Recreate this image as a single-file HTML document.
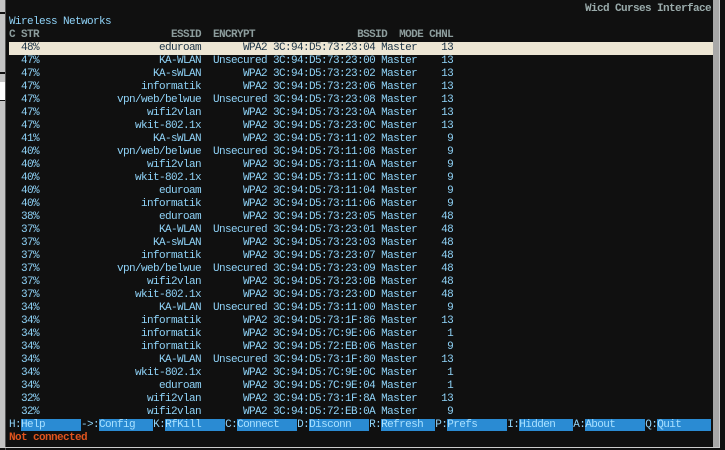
<!DOCTYPE html>
<html><head><meta charset="utf-8"><style>
html,body{margin:0;padding:0;background:#101010;width:725px;height:450px;overflow:hidden;position:relative}
.l{position:absolute;left:0;width:5px;background:#c4c4c4}
pre{margin:0;position:absolute;left:9px;font-family:"Liberation Mono",monospace;font-size:11px;letter-spacing:-0.6px;line-height:13px;height:13px;color:#8fd3f8;white-space:pre}
.hl{background:#ede6d4;color:#1d3446;left:9px;width:704px}
.hd{color:#8d9d9d;font-weight:bold}
.k{color:#8fd3f8}
.b{background:#2a8bd3;color:#a8e0ff}
</style></head><body>
<div class="l" style="top:0;height:12px"></div>
<div class="l" style="top:14px;height:58px"></div>
<div class="l" style="top:74px;height:8px"></div>
<div style="position:absolute;left:0;top:82px;width:5px;height:18px;background:#fff"></div>
<div class="l" style="top:101px;height:346px"></div>
<div style="position:absolute;left:5px;top:0;width:1px;height:450px;background:#555"></div>
<div style="position:absolute;left:713px;top:0;width:6px;height:447px;background:#a8a8a8"></div>
<div style="position:absolute;left:719px;top:0;width:1px;height:448px;background:#ccc"></div>
<div style="position:absolute;left:0;top:447px;width:720px;height:1px;background:#ccc"></div>
<pre style="top:3px;left:auto;right:14px;color:#9aabab;font-weight:bold">Wicd Curses Interface</pre>
<pre style="top:16px">Wireless Networks</pre>
<pre class="hd" style="top:29px">C STR                      ESSID  ENCRYPT                 BSSID  MODE CHNL</pre>
<pre style="top:419px"><span class="k">H:</span><span class="b">Help      </span><span class="k">-&gt;:</span><span class="b">Config   </span><span class="k">K:</span><span class="b">RfKill    </span><span class="k">C:</span><span class="b">Connect   </span><span class="k">D:</span><span class="b">Disconn   </span><span class="k">R:</span><span class="b">Refresh  </span><span class="k">P:</span><span class="b">Prefs     </span><span class="k">I:</span><span class="b">Hidden   </span><span class="k">A:</span><span class="b">About     </span><span class="k">Q:</span><span class="b">Quit     </span></pre>
<pre style="top:432px;color:#e0541e;font-weight:bold">Not connected</pre>
<pre style="top:42px" class="hl">  48%                    eduroam       WPA2 3C:94:D5:73:23:04 Master    13       </pre>
<pre style="top:55px">  47%                    KA-WLAN  Unsecured 3C:94:D5:73:23:00 Master    13</pre>
<pre style="top:68px">  47%                   KA-sWLAN       WPA2 3C:94:D5:73:23:02 Master    13</pre>
<pre style="top:81px">  47%                 informatik       WPA2 3C:94:D5:73:23:06 Master    13</pre>
<pre style="top:94px">  47%             vpn/web/belwue  Unsecured 3C:94:D5:73:23:08 Master    13</pre>
<pre style="top:107px">  47%                  wifi2vlan       WPA2 3C:94:D5:73:23:0A Master    13</pre>
<pre style="top:120px">  47%                wkit-802.1x       WPA2 3C:94:D5:73:23:0C Master    13</pre>
<pre style="top:133px">  41%                   KA-sWLAN       WPA2 3C:94:D5:73:11:02 Master     9</pre>
<pre style="top:146px">  40%             vpn/web/belwue  Unsecured 3C:94:D5:73:11:08 Master     9</pre>
<pre style="top:159px">  40%                  wifi2vlan       WPA2 3C:94:D5:73:11:0A Master     9</pre>
<pre style="top:172px">  40%                wkit-802.1x       WPA2 3C:94:D5:73:11:0C Master     9</pre>
<pre style="top:185px">  40%                    eduroam       WPA2 3C:94:D5:73:11:04 Master     9</pre>
<pre style="top:198px">  40%                 informatik       WPA2 3C:94:D5:73:11:06 Master     9</pre>
<pre style="top:211px">  38%                    eduroam       WPA2 3C:94:D5:73:23:05 Master    48</pre>
<pre style="top:224px">  37%                    KA-WLAN  Unsecured 3C:94:D5:73:23:01 Master    48</pre>
<pre style="top:237px">  37%                   KA-sWLAN       WPA2 3C:94:D5:73:23:03 Master    48</pre>
<pre style="top:250px">  37%                 informatik       WPA2 3C:94:D5:73:23:07 Master    48</pre>
<pre style="top:263px">  37%             vpn/web/belwue  Unsecured 3C:94:D5:73:23:09 Master    48</pre>
<pre style="top:276px">  37%                  wifi2vlan       WPA2 3C:94:D5:73:23:0B Master    48</pre>
<pre style="top:289px">  37%                wkit-802.1x       WPA2 3C:94:D5:73:23:0D Master    48</pre>
<pre style="top:302px">  34%                    KA-WLAN  Unsecured 3C:94:D5:73:11:00 Master     9</pre>
<pre style="top:315px">  34%                 informatik       WPA2 3C:94:D5:73:1F:86 Master    13</pre>
<pre style="top:328px">  34%                 informatik       WPA2 3C:94:D5:7C:9E:06 Master     1</pre>
<pre style="top:341px">  34%                 informatik       WPA2 3C:94:D5:72:EB:06 Master     9</pre>
<pre style="top:354px">  34%                    KA-WLAN  Unsecured 3C:94:D5:73:1F:80 Master    13</pre>
<pre style="top:367px">  34%                wkit-802.1x       WPA2 3C:94:D5:7C:9E:0C Master     1</pre>
<pre style="top:380px">  34%                    eduroam       WPA2 3C:94:D5:7C:9E:04 Master     1</pre>
<pre style="top:393px">  32%                  wifi2vlan       WPA2 3C:94:D5:73:1F:8A Master    13</pre>
<pre style="top:406px">  32%                  wifi2vlan       WPA2 3C:94:D5:72:EB:0A Master     9</pre>
</body></html>
